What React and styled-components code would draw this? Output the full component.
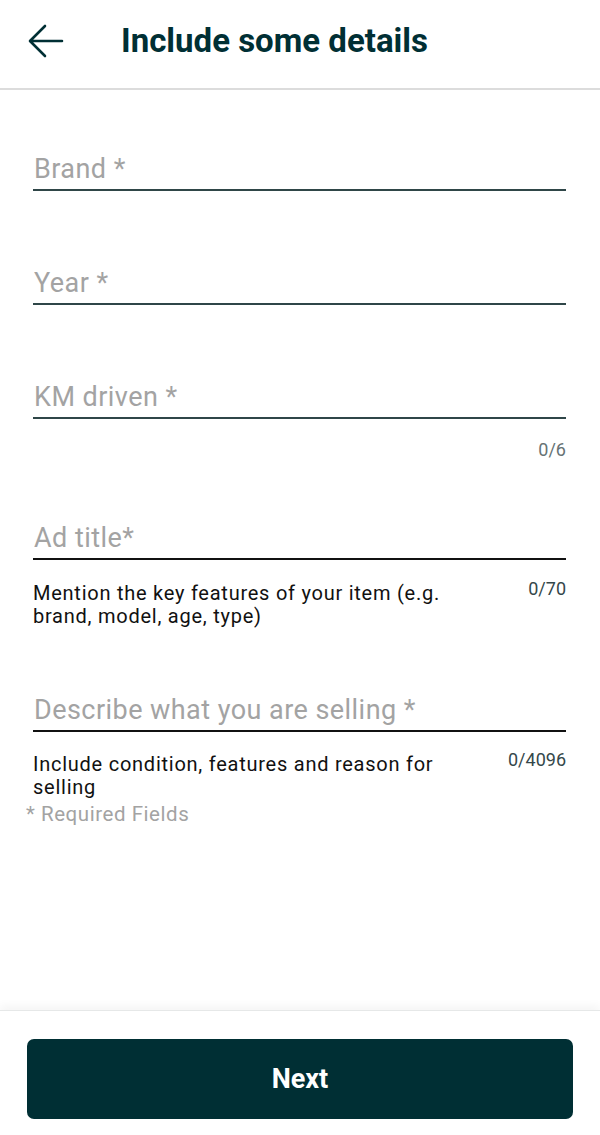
import React from "react";
import styled, { createGlobalStyle } from "styled-components";

const Global = createGlobalStyle`
  html, body { margin: 0; padding: 0; background: #ffffff; }
  body { font-family: Roboto, "Noto Sans", "Liberation Sans", sans-serif; }
  * { box-sizing: border-box; }
`;

const Page = styled.div`
  width: 600px;
  height: 1135px;
  display: flex;
  flex-direction: column;
  background: #ffffff;
  overflow: hidden;
`;

const Header = styled.header`
  height: 90px;
  flex: none;
  display: flex;
  align-items: center;
  padding: 0 0 6px 27px;
  border-bottom: 2px solid #dcdcdc;
`;

const BackButton = styled.button`
  width: 38px;
  height: 36px;
  padding: 0;
  border: 0;
  background: transparent;
  display: flex;
  align-items: center;
  justify-content: center;
  cursor: pointer;
`;

const Title = styled.h1`
  margin: 0 0 0 56px;
  font-family: Roboto, "Liberation Sans", sans-serif;
  font-size: 33px;
  line-height: 40px;
  font-weight: 700;
  color: #002f34;
`;

const Form = styled.main`
  flex: 1;
  display: flex;
  flex-direction: column;
  padding: 0 34px 0 33px;
`;

const Input = styled.input`
  display: block;
  width: 100%;
  height: 42px;
  margin-top: ${(p) => p.$top}px;
  padding: 0 0 0 1px;
  border: 0;
  border-bottom: 2px solid ${(p) => (p.$dark ? "#111111" : "#2f4648")};
  outline: none;
  background: transparent;
  font-family: Roboto, "Liberation Sans", sans-serif;
  font-size: 27px;
  letter-spacing: 0.45px;
  color: #002f34;
  &::placeholder {
    color: #a3a3a3;
    opacity: 1;
  }
`;

const CounterOnly = styled.div`
  margin-top: 20px;
  text-align: right;
  font-size: 18px;
  line-height: 22px;
  color: #667274;
`;

const HelperRow = styled.div`
  display: flex;
  justify-content: space-between;
  align-items: flex-start;
  gap: 56px;
  margin-top: ${(p) => p.$top}px;
`;

const HelperText = styled.p`
  flex: 1;
  margin: 0;
  font-size: 20px;
  line-height: 23px;
  letter-spacing: 0.75px;
  color: #111111;
`;

const Counter = styled.span`
  flex: none;
  margin-top: -4px;
  font-size: 18px;
  line-height: 22px;
  color: #34474a;
`;

const Required = styled.div`
  margin: 3px 0 0 -7px;
  font-size: 20.5px;
  line-height: 24px;
  letter-spacing: 0.55px;
  color: #a3a3a3;
`;

const Footer = styled.footer`
  flex: none;
  height: 125px;
  padding: 28px 27px 17px;
  border-top: 1px solid #e6e8e8;
  box-shadow: 0 -5px 8px rgba(0, 0, 0, 0.04);
`;

const NextButton = styled.button`
  width: 100%;
  height: 80px;
  border: 0;
  border-radius: 7px;
  background: #002f34;
  color: #ffffff;
  font-family: Roboto, "Liberation Sans", sans-serif;
  font-size: 27px;
  font-weight: 700;
  cursor: pointer;
`;

const BackIcon = () => (
  <svg width="36" height="34" viewBox="0 0 36 34" fill="none">
    <path
      d="M34 17H3M17 2L2 17L17 32"
      stroke="#002f34"
      strokeWidth="2.6"
      strokeLinecap="round"
      strokeLinejoin="round"
    />
  </svg>
);

export default function App() {
  return (
    <Page>
      <Global />
      <Header>
        <BackButton aria-label="Back">
          <BackIcon />
        </BackButton>
        <Title>Include some details</Title>
      </Header>
      <Form>
        <Input $top={59} placeholder="Brand *" />
        <Input $top={72} placeholder="Year *" />
        <Input $top={72} placeholder="KM driven *" />
        <CounterOnly>0/6</CounterOnly>
        <Input $top={57} $dark placeholder="Ad title*" />
        <HelperRow $top={22}>
          <HelperText>Mention the key features of your item (e.g. brand, model, age, type)</HelperText>
          <Counter>0/70</Counter>
        </HelperRow>
        <Input $top={62} $dark placeholder="Describe what you are selling *" />
        <HelperRow $top={21}>
          <HelperText>Include condition, features and reason for selling</HelperText>
          <Counter>0/4096</Counter>
        </HelperRow>
        <Required>* Required Fields</Required>
      </Form>
      <Footer>
        <NextButton>Next</NextButton>
      </Footer>
    </Page>
  );
}
